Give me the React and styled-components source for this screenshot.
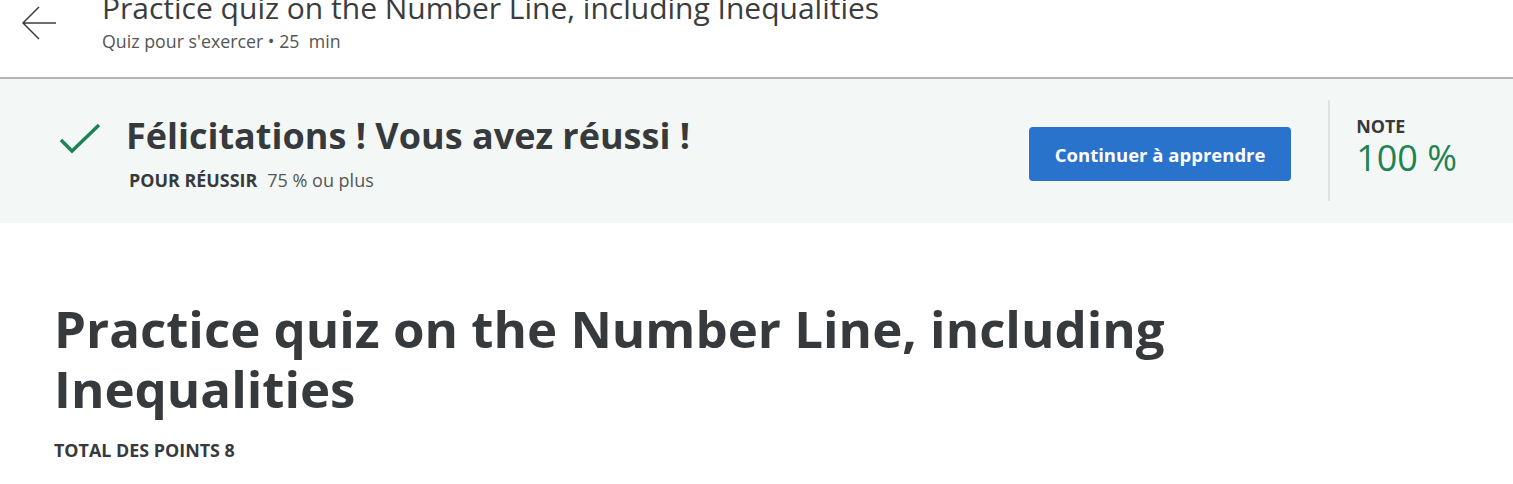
import styled, { createGlobalStyle } from "styled-components";

const Global = createGlobalStyle`
  body {
    margin: 0;
    font-family: "Open Sans", "Noto Sans", sans-serif;
    color: #373a3c;
    background: #fff;
    overflow: hidden;
  }
`;

const Header = styled.header`
  display: flex;
  align-items: flex-start;
  height: 77px;
  border-bottom: 2px solid #b5b5b5;
  box-sizing: content-box;
`;

const BackButton = styled.button`
  width: 102px;
  height: 46px;
  padding: 0 0 0 20px;
  border: none;
  background: none;
  display: flex;
  align-items: center;
  justify-content: flex-start;
  cursor: pointer;
`;

const HeaderText = styled.div`
  display: flex;
  flex-direction: column;
  margin-top: -10px;
`;

const HeaderTitle = styled.h2`
  margin: 0;
  font-size: 30px;
  font-weight: 400;
  line-height: 36px;
  color: #3a3c3e;
`;

const HeaderMeta = styled.span`
  margin-top: 3px;
  font-size: 17.8px;
  line-height: 24px;
  color: #555;
`;

const Banner = styled.section`
  display: flex;
  align-items: flex-start;
  height: 144px;
  padding: 0 56px 0 58px;
  background: #f3f8f6;
`;

const Result = styled.div`
  flex: 1;
  display: flex;
  align-items: flex-start;
  gap: 24px;
  padding-top: 43px;
`;

const ResultText = styled.div`
  display: flex;
  flex-direction: column;
  gap: 10px;
  padding-top: 1px;
`;

const ResultTitle = styled.h3`
  margin: -9px 0 0;
  font-size: 36px;
  font-weight: 700;
  line-height: 44px;
  color: #373a3c;
`;

const PassLine = styled.div`
  padding-left: 3px;
  font-size: 18px;
  line-height: 24px;
  color: #555;
  display: flex;
  align-items: baseline;
  gap: 10px;
`;

const Label = styled.span`
  font-size: 17.9px;
  font-weight: 700;
  line-height: 24px;
  color: #373a3c;
`;

const PrimaryButton = styled.button`
  flex: none;
  width: 262px;
  height: 54px;
  margin: 48px 37px 0 0;
  border: none;
  border-radius: 4px;
  background: #2a73cc;
  color: #fff;
  font-family: inherit;
  font-size: 18.5px;
  font-weight: 700;
  cursor: pointer;
`;

const Grade = styled.div`
  flex: none;
  height: 101px;
  margin-top: 21px;
  border-left: 2px solid #dfe3e2;
  padding: 14px 0 0 26px;
  box-sizing: border-box;
  display: flex;
  flex-direction: column;
`;

const GradeValue = styled.span`
  font-size: 36px;
  line-height: 40px;
  color: #1f8354;
`;

const Main = styled.main`
  padding: 75px 54px 0;
`;

const PageTitle = styled.h1`
  margin: 0;
  font-size: 51px;
  font-weight: 700;
  line-height: 60px;
  color: #373a3c;
  max-width: 1200px;
`;

const Points = styled(Label)`
  display: block;
  margin-top: 20px;
`;

export default function App() {
  return (
    <>
      <Global />
      <Header>
        <BackButton aria-label="Retour">
          <svg width="38" height="38" viewBox="0 0 38 38" fill="none" stroke="#3a3c3e" strokeWidth="1.5">
            <path d="M36 19H3M19 3L3 19l16 16" />
          </svg>
        </BackButton>
        <HeaderText>
          <HeaderTitle>Practice quiz on the Number Line, including Inequalities</HeaderTitle>
          <HeaderMeta>Quiz pour s'exercer • 25&nbsp; min</HeaderMeta>
        </HeaderText>
      </Header>

      <Banner>
        <Result>
          <svg width="44" height="36" viewBox="0 0 44 36" fill="none" stroke="#1f8354" strokeWidth="3.5">
            <path d="M3 18l11 11L41 3" />
          </svg>
          <ResultText>
            <ResultTitle>Félicitations ! Vous avez réussi !</ResultTitle>
            <PassLine>
              <Label>POUR RÉUSSIR</Label>
              <span>75 % ou plus</span>
            </PassLine>
          </ResultText>
        </Result>
        <PrimaryButton>Continuer à apprendre</PrimaryButton>
        <Grade>
          <Label>NOTE</Label>
          <GradeValue>100 %</GradeValue>
        </Grade>
      </Banner>

      <Main>
        <PageTitle>Practice quiz on the Number Line, including Inequalities</PageTitle>
        <Points>TOTAL DES POINTS 8</Points>
      </Main>
    </>
  );
}
